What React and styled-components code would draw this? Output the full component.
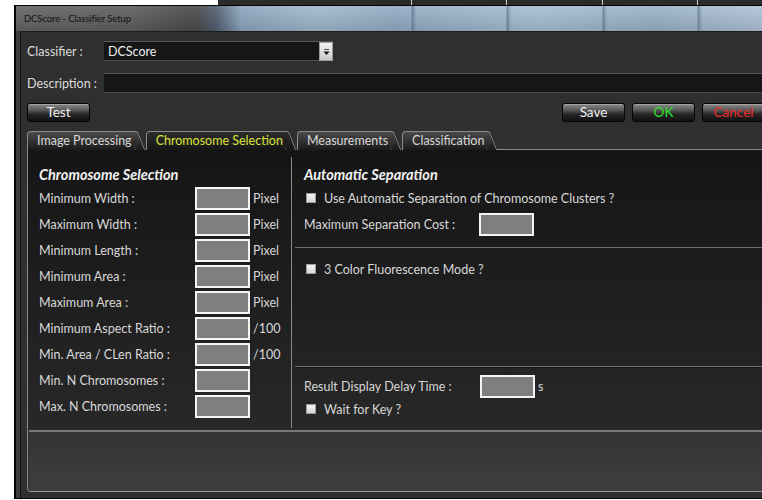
import React from "react";
import styled, { createGlobalStyle } from "styled-components";

const GlobalStyle = createGlobalStyle`
  html, body {
    margin: 0;
    padding: 0;
    background: #ffffff;
    overflow: hidden;
  }
  body {
    font-family: Lato, "Open Sans", sans-serif;
    width: 762px;
    height: 500px;
  }
`;

const Screen = styled.div`
  width: 762px;
  height: 500px;
  overflow: hidden;
`;

// strip of the window that sits behind the dialog
const Backdrop = styled.div`
  height: 5px;
  display: flex;
`;

const BackdropBlank = styled.div`
  width: 218px;
  background: #ffffff;
`;

const BackdropBar = styled.div`
  flex: 1;
  background:
    linear-gradient(90deg, transparent 193px, #cfcfcf 193px, #cfcfcf 194px, transparent 194px),
    linear-gradient(90deg, transparent 288px, #cfcfcf 288px, #cfcfcf 289px, transparent 289px),
    linear-gradient(90deg, transparent 384px, #cfcfcf 384px, #cfcfcf 385px, transparent 385px),
    linear-gradient(90deg, transparent 479px, #cfcfcf 479px, #cfcfcf 480px, transparent 480px),
    #2b2b2b;
`;

const Window = styled.div`
  margin-left: 14px;
  width: 759px;
  border: 1px solid #050505;
  border-left-width: 2px;
  background: #3e3e3e;
  display: flex;
  flex-direction: column;
`;

const TitleBar = styled.div`
  height: 25px;
  display: flex;
  align-items: center;
  padding-left: 8px;
  background:
    linear-gradient(90deg, transparent 395px, rgba(70, 92, 115, 0.55) 396px, transparent 400px),
    linear-gradient(90deg, transparent 490px, rgba(70, 92, 115, 0.55) 491px, transparent 495px),
    linear-gradient(90deg, transparent 586px, rgba(70, 92, 115, 0.55) 587px, transparent 591px),
    linear-gradient(90deg, transparent 681px, rgba(70, 92, 115, 0.55) 682px, transparent 686px),
    linear-gradient(180deg, rgba(255, 255, 255, 0.08), rgba(0, 0, 0, 0.12)),
    linear-gradient(90deg, #666666 0, #606060 115px, #4b4b4b 180px, #526073 200px, #8ea7bf 225px, #a3bad0 300px, #94adc5 380px, #a9c0d5 520px, #9cb3c9 640px, #b4c8da 766px);
`;

const TitleText = styled.span`
  font-size: 9.5px;
  color: #121212;
  letter-spacing: -0.1px;
`;

const Frame = styled.div`
  padding: 0 4px;
`;

const Body = styled.div`
  border-left: 1px solid #141414;
  border-top: 1px solid #1c1c1c;
  background: #2f2f2f;
  padding: 9px 6px 6px 6px;
  display: flex;
  flex-direction: column;
`;

const FieldRow = styled.div`
  display: flex;
  align-items: center;
  height: 20px;
  margin-bottom: ${(p) => p.$gap || 0}px;
`;

const FieldLabel = styled.div`
  width: 77px;
  font-size: 12.5px;
  color: #dcdcdc;
`;

const TextBox = styled.div`
  height: 20px;
  box-sizing: border-box;
  width: ${(p) => (p.$width ? `${p.$width}px` : "auto")};
  flex: ${(p) => (p.$width ? "none" : 1)};
  background: #161616;
  border-top: 1px solid #585858;
  border-bottom: 1px solid #4a4a4a;
  display: flex;
  align-items: center;
  font-size: 12.5px;
  color: #ececec;
  padding-left: 4px;
`;

const DropButton = styled.div`
  margin-left: auto;
  width: 14px;
  height: 19px;
  margin-top: 1px;
  background: linear-gradient(180deg, #f2f2f2, #c8c8c8);
  border: 1px solid #9a9a9a;
  box-sizing: border-box;
  display: flex;
  align-items: center;
  justify-content: center;
`;

const ButtonBar = styled.div`
  display: flex;
  justify-content: space-between;
  margin-bottom: 9px;
`;

const ButtonGroup = styled.div`
  display: flex;
  gap: 7px;
`;

const Button = styled.div`
  width: 63px;
  height: 19px;
  box-sizing: border-box;
  border: 1px solid #050505;
  border-radius: 3px;
  background: linear-gradient(180deg, #8a8a8a 0%, #5a5a5a 35%, #262626 60%, #111111 100%);
  box-shadow: inset 0 1px 0 rgba(255, 255, 255, 0.25);
  display: flex;
  align-items: center;
  justify-content: center;
  font-size: 13.5px;
  color: ${(p) => p.$color || "#f0f0f0"};
  padding-bottom: 1px;
`;

const TabStrip = styled.div`
  display: flex;
  align-items: flex-end;
  height: 19px;
`;

const Tab = styled.div`
  position: relative;
  z-index: 0;
  height: 19px;
  box-sizing: border-box;
  display: flex;
  align-items: center;
  padding: 0 2px 1px 9px;
  margin-right: 12px;
  font-size: 12.5px;
  color: ${(p) => (p.$active ? "#dce33a" : "#d8d8d8")};
  border: 1px solid #8c8c8c;
  border-right: none;
  border-bottom: none;
  border-top-left-radius: 4px;
  background: ${(p) =>
    p.$active
      ? "linear-gradient(180deg, #2c2c2c, #161616)"
      : "linear-gradient(180deg, #4a4a4a, #1a1a1a)"};

  &::after {
    content: "";
    position: absolute;
    z-index: -1;
    top: -1px;
    bottom: 0;
    right: -4px;
    width: 8px;
    border-top: 1px solid #8c8c8c;
    border-right: 1px solid #8c8c8c;
    border-top-right-radius: 3px;
    background: inherit;
    transform: skewX(21deg);
    transform-origin: top left;
  }
`;

const TabFill = styled.div`
  flex: 1;
  align-self: stretch;
  border-bottom: 1px solid #8c8c8c;
  margin-left: -5px;
`;

const Panel = styled.div`
  border-left: 1px solid #8c8c8c;
  border-bottom: 1px solid #9a9a9a;
  border-bottom-left-radius: 4px;
  display: flex;
  flex-direction: column;
  height: 341px;
`;

const Columns = styled.div`
  display: flex;
  height: 280px;
  background: linear-gradient(180deg, #151515 0%, #1e1e1e 50%, #282828 100%);
`;

const LeftColumn = styled.div`
  width: 252px;
  padding: 13px 0 0 11px;
`;

const ColumnDivider = styled.div`
  width: 1px;
  margin: 7px 0 2px;
  background: #8a8a8a;
`;

const RightColumn = styled.div`
  flex: 1;
  display: flex;
  flex-direction: column;
`;

const Section = styled.div`
  height: ${(p) => p.$height}px;
  box-sizing: border-box;
  padding: ${(p) => p.$top}px 0 0 9px;
  margin-left: 3px;
  border-bottom: ${(p) => (p.$last ? "none" : "1px solid #6c6c6c")};
  box-shadow: ${(p) => (p.$last ? "none" : "0 1px 0 #1a1a1a")};
`;

const Heading = styled.div`
  height: 22px;
  display: flex;
  align-items: center;
  font-size: 14.5px;
  font-weight: 700;
  font-style: italic;
  color: #f2f2f2;
`;

const Row = styled.div`
  height: ${(p) => p.$height || 26}px;
  display: flex;
  align-items: center;
  font-size: 12.5px;
  color: #d8d8d8;
`;

const RowLabel = styled.div`
  width: ${(p) => p.$width}px;
`;

const NumberBox = styled.div`
  width: 55px;
  height: 23px;
  box-sizing: border-box;
  border: 2px solid #f4f4f4;
  background: #7f7f7f;
`;

const Unit = styled.span`
  margin-left: 3px;
  font-size: 12.5px;
  color: #d8d8d8;
`;

const Check = styled.span`
  width: 10px;
  height: 10px;
  box-sizing: border-box;
  margin: 0 8px 0 2px;
  background: linear-gradient(180deg, #f4f4f4, #d6d6d6);
  border: 1px solid #9c9c9c;
`;

const Footer = styled.div`
  flex: 1;
  margin-left: 1px;
  border-top: 2px solid #7a7a7a;
  background: linear-gradient(180deg, #343434, #3e3e3e);
`;

const selectionRows = [
  ["Minimum Width :", "Pixel"],
  ["Maximum Width :", "Pixel"],
  ["Minimum Length :", "Pixel"],
  ["Minimum Area :", "Pixel"],
  ["Maximum Area :", "Pixel"],
  ["Minimum Aspect Ratio :", "/100"],
  ["Min. Area / CLen Ratio :", "/100"],
  ["Min. N Chromosomes :", ""],
  ["Max. N Chromosomes :", ""],
];

const tabs = ["Image Processing", "Chromosome Selection", "Measurements", "Classification"];

const App = () => {
  return (
    <Screen>
      <GlobalStyle />
      <Backdrop>
        <BackdropBlank />
        <BackdropBar />
      </Backdrop>
      <Window>
        <TitleBar>
          <TitleText>DCScore - Classifier Setup</TitleText>
        </TitleBar>
        <Frame>
          <Body>
            <FieldRow $gap={12}>
              <FieldLabel>Classifier :</FieldLabel>
              <TextBox $width={229}>
                DCScore
                <DropButton>
                  <svg width="7" height="8" viewBox="0 0 7 8">
                    <rect x="1" y="1" width="5" height="1" fill="#555" />
                    <path d="M0.5 3.5 L6.5 3.5 L3.5 7 Z" fill="#111" />
                  </svg>
                </DropButton>
              </TextBox>
            </FieldRow>
            <FieldRow $gap={10}>
              <FieldLabel>Description :</FieldLabel>
              <TextBox />
            </FieldRow>
            <ButtonBar>
              <Button>Test</Button>
              <ButtonGroup>
                <Button>Save</Button>
                <Button $color="#2fe02f">OK</Button>
                <Button $color="#f02a2a">Cancel</Button>
              </ButtonGroup>
            </ButtonBar>

            <TabStrip>
              {tabs.map((t) => (
                <Tab key={t} $active={t === "Chromosome Selection"}>
                  {t}
                </Tab>
              ))}
              <TabFill />
            </TabStrip>

            <Panel>
              <Columns>
                <LeftColumn>
                  <Heading>Chromosome Selection</Heading>
                  {selectionRows.map(([label, unit]) => (
                    <Row key={label}>
                      <RowLabel $width={156}>{label}</RowLabel>
                      <NumberBox />
                      {unit && <Unit>{unit}</Unit>}
                    </Row>
                  ))}
                </LeftColumn>
                <ColumnDivider />
                <RightColumn>
                  <Section $height={98} $top={13}>
                    <Heading>Automatic Separation</Heading>
                    <Row>
                      <Check />
                      Use Automatic Separation of Chromosome Clusters ?
                    </Row>
                    <Row>
                      <RowLabel $width={175}>Maximum Separation Cost :</RowLabel>
                      <NumberBox />
                    </Row>
                  </Section>
                  <Section $height={119} $top={8}>
                    <Row>
                      <Check />3 Color Fluorescence Mode ?
                    </Row>
                  </Section>
                  <Section $height={63} $top={7} $last>
                    <Row $height={24}>
                      <RowLabel $width={176}>Result Display Delay Time :</RowLabel>
                      <NumberBox />
                      <Unit>s</Unit>
                    </Row>
                    <Row $height={22}>
                      <Check />
                      Wait for Key ?
                    </Row>
                  </Section>
                </RightColumn>
              </Columns>
              <Footer />
            </Panel>
          </Body>
        </Frame>
      </Window>
    </Screen>
  );
};

export default App;
